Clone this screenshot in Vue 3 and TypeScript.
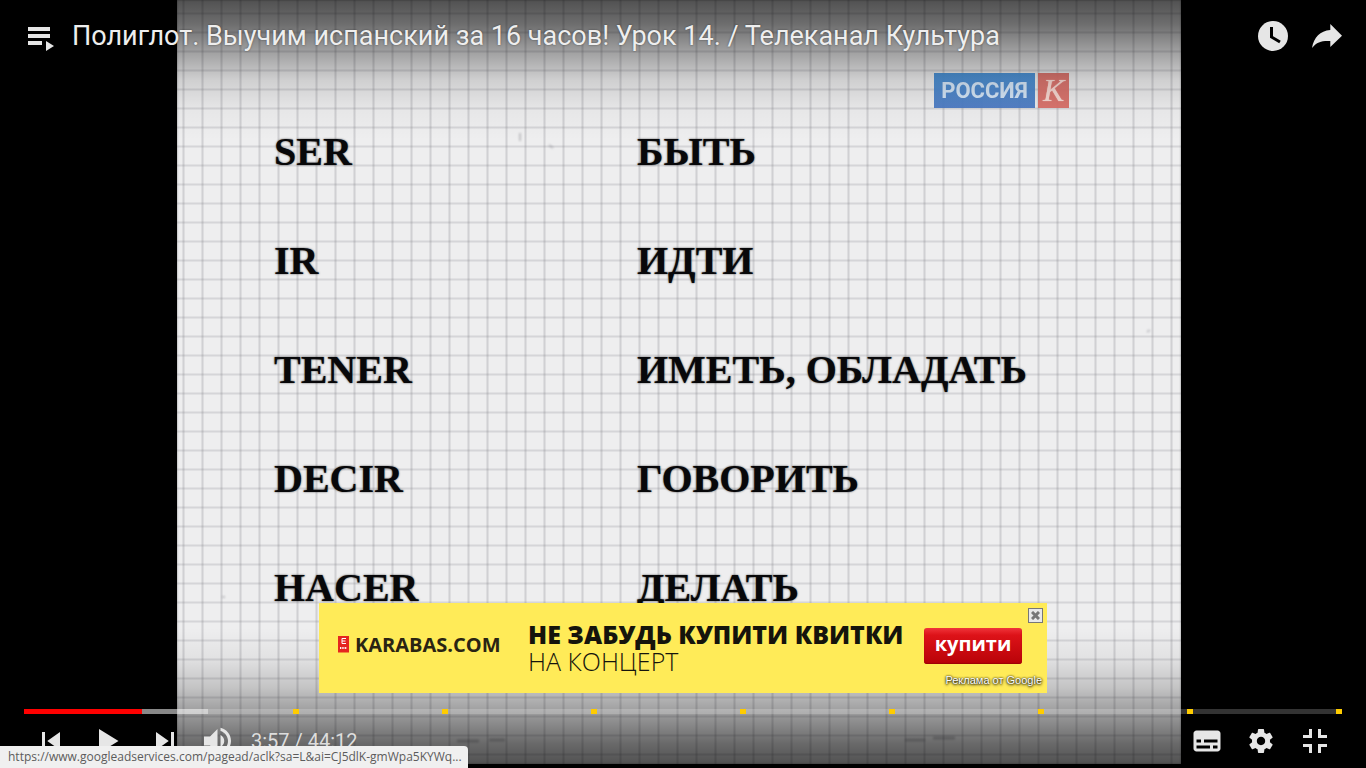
<script setup lang="ts">
import { computed, ref } from 'vue'

interface WordPair {
  es: string
  ru: string
}

const words: WordPair[] = [
  { es: 'SER', ru: 'БЫТЬ' },
  { es: 'IR', ru: 'ИДТИ' },
  { es: 'TENER', ru: 'ИМЕТЬ, ОБЛАДАТЬ' },
  { es: 'DECIR', ru: 'ГОВОРИТЬ' },
  { es: 'HACER', ru: 'ДЕЛАТЬ' },
]

const duration = 2652
const current = ref(237)
const buffered = ref(370)
const adBreaks: number[] = [541, 841, 1141, 1441, 1740, 2040, 2340, 2640]

const percent = (seconds: number): string => `${(seconds / duration) * 100}%`
const clock = (seconds: number): string =>
  `${Math.floor(seconds / 60)}:${String(seconds % 60).padStart(2, '0')}`
const timeLabel = computed(() => `${clock(current.value)} / ${clock(duration)}`)
const adVisible = ref(true)
</script>

<template>
  <main class="player">
    <div class="stage">
      <section class="frame" aria-label="Видео">
        <svg class="paper" aria-hidden="true">
          <defs>
            <pattern id="cells" x="-4" y="4" width="19" height="19" patternUnits="userSpaceOnUse">
              <rect x="0" y="8" width="19" height="3" fill="#70707c" opacity=".1" />
              <rect x="0" y="9" width="19" height="1" fill="#70707c" opacity=".1" />
              <rect x="9" y="0" width="3" height="19" fill="#70707c" opacity=".13" />
              <rect x="10" y="0" width="1" height="19" fill="#70707c" opacity=".13" />
            </pattern>
          </defs>
          <rect width="100%" height="100%" fill="url(#cells)" />
          <g class="smudges" fill="none" stroke="#303038" stroke-width="3" opacity=".25">
            <path d="M280 741h22M312 740h16M728 740h20M756 738h22" />
          </g>
          <g class="smudges" fill="none" stroke="#808088" stroke-width="2" opacity=".4">
            <path d="M343 133v8M372 145l4 3M970 332l3-2M45 597h3" />
          </g>
        </svg>
        <div class="channel">
          <span class="channel-name">РОССИЯ</span>
          <span class="channel-k">К</span>
        </div>
        <dl class="words">
          <div v-for="word in words" :key="word.es" class="pair">
            <dt>{{ word.es }}</dt>
            <dd>{{ word.ru }}</dd>
          </div>
        </dl>
      </section>
    </div>

    <header class="top">
      <button class="icon-button list" type="button" aria-label="Плейлист">
        <svg width="26" height="24" viewBox="0 0 26 24">
          <path d="M0 0h22v4H0zM0 7h22v4H0zM0 14h14v4H0zM18 14l8 5-8 5z" />
        </svg>
      </button>
      <h1 class="title">Полиглот. Выучим испанский за 16 часов! Урок 14. / Телеканал Культура</h1>
      <button class="icon-button" type="button" aria-label="Посмотреть позже">
        <svg width="30" height="30" viewBox="0 0 30 30">
          <circle cx="15" cy="15" r="15" />
          <path class="hands" d="M13.500 6v10l8.500 5" />
        </svg>
      </button>
      <button class="icon-button" type="button" aria-label="Поделиться">
        <svg width="30" height="24" viewBox="0 0 30 24">
          <path d="M18.300 0 30 11.700 18.300 23V17C10.500 16.600 5 17.500 0 24 2 13 8 7 18.300 6z" />
        </svg>
      </button>
    </header>

    <footer class="bottom">
      <aside v-if="adVisible" class="ad">
        <a class="brand" href="#karabas">
          <svg width="11" height="17" viewBox="0 0 11 17" aria-hidden="true">
            <path fill="#e5261f" d="M0 0h11v17l-1-1-1 1-1-1-1 1-1-1-1 1-1-1-1 1-1-1-1 1-1-1z" />
            <path fill="none" stroke="#fff" d="M8 2.500H4v5h4M4 5h3.500" />
            <path fill="none" stroke="#fff" stroke-width="2" stroke-dasharray="1 .7" d="M2 12h7" />
          </svg>
          KARABAS.COM
        </a>
        <p class="slogan">
          <strong>НЕ ЗАБУДЬ КУПИТИ КВИТКИ</strong>
          <span>НА КОНЦЕРТ</span>
        </p>
        <button class="buy" type="button">купити</button>
        <button class="close" type="button" aria-label="Закрыть" @click="adVisible = false">
          <svg width="9" height="9" viewBox="0 0 9 9"><path d="M1 1l7 7M8 1l-7 7" /></svg>
        </button>
        <a class="by" href="#ads">Реклама от Google</a>
      </aside>

      <div class="progress" role="slider" aria-label="Перемотка" :aria-valuenow="current" :aria-valuemax="duration">
        <div class="loaded" :style="{ width: percent(buffered) }"></div>
        <div class="played" :style="{ width: percent(current) }"></div>
        <i v-for="at in adBreaks" :key="at" class="mark" :style="{ left: percent(at) }"></i>
      </div>

      <div class="controls">
        <button class="icon-button" type="button" aria-label="Предыдущее">
          <svg width="54" height="54" viewBox="0 0 36 36"><path d="m12 12h2v12h-2zm3.500 6 8.500 6V12z" /></svg>
        </button>
        <button class="icon-button play" type="button" aria-label="Смотреть">
          <svg width="54" height="54" viewBox="0 0 36 36"><path d="M12 26 25 18 12 10z" /></svg>
        </button>
        <button class="icon-button" type="button" aria-label="Следующее">
          <svg width="54" height="54" viewBox="0 0 36 36"><path d="M12 24 20.500 18 12 12zM22 12v12h2V12z" /></svg>
        </button>
        <button class="icon-button" type="button" aria-label="Звук">
          <svg width="54" height="54" viewBox="0 0 36 36">
            <path
              d="M8 21h4l5 5V10l-5 5H8zM19 14v8c1.480-.68 2.500-2.230 2.500-4 0-1.740-1.020-3.260-2.500-4zM19 11.290c2.890.86 5 3.540 5 6.710s-2.110 5.850-5 6.710v2.060c4.010-.91 7-4.490 7-8.770s-2.990-7.860-7-8.770z"
            />
          </svg>
        </button>
        <span class="time">{{ timeLabel }}</span>
        <button class="icon-button first-right" type="button" aria-label="Субтитры">
          <svg width="54" height="54" viewBox="0 0 36 36">
            <path
              fill-rule="evenodd"
              d="M11 11c-1.100 0-2 .9-2 2v10c0 1.100.9 2 2 2h14c1.100 0 2-.9 2-2V13c0-1.100-.9-2-2-2zM11 17h3v2h-3zM20 23h-9v-2h9zM25 23h-3v-2h3zM25 19h-9v-2h9z"
            />
          </svg>
        </button>
        <button class="icon-button" type="button" aria-label="Настройки">
          <svg width="54" height="54" viewBox="0 0 36 36">
            <path
              fill-rule="evenodd"
              d="m 23.94,18.78 c .03,-0.25 .05,-0.51 .05,-0.78 0,-0.27 -0.02,-0.52 -0.05,-0.78 l 1.68,-1.32 c .15,-0.12 .19,-0.33 .09,-0.51 l -1.6,-2.76 c -0.09,-0.17 -0.31,-0.24 -0.48,-0.17 l -1.99,.8 c -0.41,-0.32 -0.86,-0.58 -1.35,-0.78 l -0.30,-2.12 c -0.02,-0.19 -0.19,-0.33 -0.39,-0.33 l -3.2,0 c -0.2,0 -0.36,.14 -0.39,.33 l -0.30,2.12 c -0.48,.2 -0.93,.47 -1.35,.78 l -1.99,-0.8 c -0.18,-0.07 -0.39,0 -0.48,.17 l -1.6,2.76 c -0.10,.17 -0.05,.39 .09,.51 l 1.68,1.32 c -0.03,.25 -0.05,.52 -0.05,.78 0,.26 .02,.52 .05,.78 l -1.68,1.32 c -0.15,.12 -0.19,.33 -0.09,.51 l 1.6,2.76 c .09,.17 .31,.24 .48,.17 l 1.99,-0.8 c .41,.32 .86,.58 1.35,.78 l .30,2.12 c .02,.19 .19,.33 .39,.33 l 3.2,0 c .2,0 .36,-0.14 .39,-0.33 l .30,-2.12 c .48,-0.2 .93,-0.47 1.35,-0.78 l 1.99,.8 c .18,.07 .39,0 .48,-0.17 l 1.6,-2.76 c .09,-0.17 .05,-0.39 -0.09,-0.51 l -1.68,-1.32 z m -5.94,2.01 c -1.54,0 -2.8,-1.25 -2.8,-2.8 0,-1.54 1.25,-2.8 2.8,-2.8 1.54,0 2.8,1.25 2.8,2.8 0,1.54 -1.25,2.8 -2.8,2.8 z"
            />
          </svg>
        </button>
        <button class="icon-button" type="button" aria-label="Выход из полноэкранного режима">
          <svg width="54" height="54" viewBox="0 0 36 36">
            <path d="M14 14h-4v2h6v-6h-2zM22 14v-4h-2v6h6v-2zM20 26h2v-4h4v-2h-6zM10 22h4v4h2v-6h-6z" />
          </svg>
        </button>
      </div>
    </footer>

    <div class="status">https://www.googleadservices.com/pagead/aclk?sa=L&amp;ai=CJ5dlK-gmWpa5KYWq...</div>
  </main>
</template>

<style>
html,
body {
  margin: 0;
  background: #000;
}
</style>

<style scoped>
.player {
  position: relative;
  display: flex;
  flex-direction: column;
  justify-content: space-between;
  height: 100vh;
  overflow: hidden;
  background: #000;
  font-family: Roboto, 'Liberation Sans', sans-serif;
}

.stage {
  position: absolute;
  inset: 0;
  display: grid;
  grid-template-columns: 177fr 1004fr 185fr;
  padding-bottom: 4px;
}

.stage::after {
  content: '';
  position: absolute;
  inset: 0;
  background:
    linear-gradient(
      to bottom,
      rgba(0, 0, 0, 0.66) 0,
      rgba(0, 0, 0, 0.54) 24px,
      rgba(0, 0, 0, 0.34) 50px,
      rgba(0, 0, 0, 0.13) 80px,
      rgba(0, 0, 0, 0.03) 110px,
      transparent 140px
    ),
    linear-gradient(
      to top,
      rgba(0, 0, 0, 0.68) 0,
      rgba(0, 0, 0, 0.56) 24px,
      rgba(0, 0, 0, 0.38) 50px,
      rgba(0, 0, 0, 0.18) 80px,
      rgba(0, 0, 0, 0.05) 110px,
      transparent 140px
    );
}

.frame {
  position: relative;
  grid-column: 2;
  overflow: hidden;
  background: #eeeeef;
  box-shadow: inset 0 0 2px #777;
}

.paper {
  position: absolute;
  inset: 0;
  width: 100%;
  height: 100%;
}

.smudges {
  filter: blur(1px);
}

.channel {
  position: absolute;
  top: 73px;
  right: 112px;
  display: flex;
  gap: 3px;
  height: 35px;
  line-height: 35px;
  text-align: center;
  opacity: 0.95;
}

.channel-name {
  width: 101px;
  background: linear-gradient(#4590d6, #4d7cc6);
  color: #d6e8fa;
  font-size: 22px;
  font-weight: 700;
}

.channel-k {
  width: 31px;
  background: #dc7069;
  color: #fbd9d2;
  font: italic 32px/35px 'Liberation Serif', serif;
  text-shadow: 0 0 1px #fbd9d2;
}

.words {
  position: relative;
  margin: 0;
  padding: 97px 0 0 97px;
}

.pair {
  display: grid;
  grid-template-columns: 363px 1fr;
  color: #08080a;
  font: 700 40px/109px 'Liberation Serif', serif;
  text-shadow: 0 0 2px rgba(0, 0, 0, 0.7);
  white-space: nowrap;
}

.pair dd {
  margin: 0;
}

.icon-button {
  display: block;
  flex: none;
  padding: 0;
  border: 0;
  background: none;
  cursor: pointer;
}

.icon-button svg {
  display: block;
  fill: #e6e6e6;
}

.icon-button .hands {
  fill: none;
  stroke: #000;
  stroke-width: 3;
}

.top {
  position: relative;
  display: flex;
  align-items: center;
  gap: 24px;
  height: 72px;
  padding: 0 24px 0 28px;
}

.list {
  padding-top: 6px;
}

.title {
  flex: 1;
  margin: 0 0 0 -6px;
  overflow: hidden;
  color: #eee;
  font-size: 27px;
  font-weight: 400;
  line-height: 36px;
  text-shadow: 0 0 2px rgba(0, 0, 0, 0.5);
  text-overflow: ellipsis;
  white-space: nowrap;
}

.bottom {
  position: relative;
  padding: 0 24px;
}

.ad {
  position: relative;
  display: flex;
  align-items: center;
  box-sizing: border-box;
  width: 728px;
  height: 90px;
  margin: 0 auto 16px;
  padding: 0 25px 8px 19px;
  background: #ffeb58;
  color: #15140c;
  font-family: 'Open Sans', 'Noto Sans', sans-serif;
}

.brand {
  display: flex;
  align-items: center;
  gap: 6px;
  width: 190px;
  color: #2a2413;
  font-size: 20px;
  font-weight: 700;
  text-decoration: none;
}

.slogan {
  display: flex;
  flex: 1;
  flex-direction: column;
  margin: 8px 0 0;
  font-size: 25px;
  line-height: 27px;
  white-space: nowrap;
}

.slogan strong {
  font-weight: 800;
}

.slogan span {
  font-weight: 300;
}

.buy {
  width: 98px;
  height: 36px;
  margin-top: 4px;
  padding: 0 0 4px;
  border: 0;
  border-radius: 3px;
  background: linear-gradient(#f0343a, #dd1218 20%, #b80308);
  box-shadow: inset 0 -1px 1px #9c0206;
  color: #fff;
  font: 700 20px/30px 'Open Sans', 'Noto Sans', sans-serif;
}

.close {
  position: absolute;
  top: 5px;
  right: 4px;
  display: grid;
  place-items: center;
  width: 15px;
  height: 15px;
  padding: 0;
  border: 1px solid #777;
  background: #e8e8e8;
}

.close path {
  stroke: #777;
  stroke-width: 3;
}

.by {
  position: absolute;
  right: 5px;
  bottom: 5px;
  color: #fff;
  font: 11px/16px 'Liberation Sans', Arial, sans-serif;
  text-decoration: none;
  text-shadow: 0 0 2px #000, 0 1px 3px #000;
}

.progress {
  position: relative;
  height: 5px;
  background: rgba(255, 255, 255, 0.2);
}

.loaded,
.played,
.mark {
  position: absolute;
  top: 0;
  height: 5px;
}

.loaded {
  background: rgba(255, 255, 255, 0.42);
}

.played {
  background: #f00;
}

.mark {
  width: 6px;
  background: #fc0;
}

.controls {
  display: flex;
  align-items: center;
  height: 54px;
}

.play {
  margin: 0 3px;
}

.time {
  margin-left: 5px;
  color: #ddd;
  font-size: 20px;
  line-height: 54px;
}

.first-right {
  margin-left: auto;
}

.status {
  position: absolute;
  bottom: 0;
  left: 0;
  box-sizing: border-box;
  height: 22px;
  padding: 0 6px 0 8px;
  border-radius: 0 4px 0 0;
  background: #f0f0f0;
  color: #5c5c5c;
  font: 12px/22px 'Open Sans', 'Noto Sans', sans-serif;
  white-space: nowrap;
}
</style>
